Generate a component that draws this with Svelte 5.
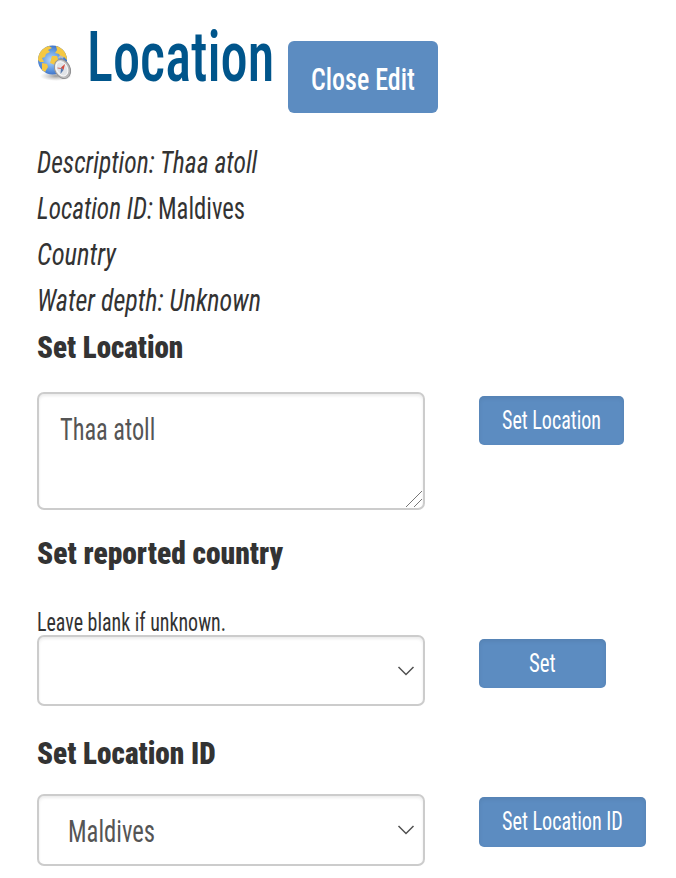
<script>
  // Condenses a label horizontally so that it fills the given width.
  function fit(node, width) {
    const scale = width / node.offsetWidth;
    node.style.transform = `scaleX(${scale})`;
    node.parentElement.style.width = `${width}px`;
  }

  const details = [
    { parts: [{ text: 'Description: Thaa atoll', width: 220, em: true }] },
    {
      parts: [
        { text: 'Location ID:', width: 116, em: true },
        { text: 'Maldives', width: 87, em: false }
      ]
    },
    { parts: [{ text: 'Country', width: 79, em: true }] },
    { parts: [{ text: 'Water depth: Unknown', width: 224, em: true }] }
  ];
</script>

{#snippet label(text, width)}
  <span class="fit"><span use:fit={width}>{text}</span></span>
{/snippet}

{#snippet chevron()}
  <svg class="chevron" width="18" height="12" viewBox="0 0 18 12">
    <path d="M1.5 2 L9 9.5 L16.5 2" fill="none" stroke="#505050" stroke-width="1.5" />
  </svg>
{/snippet}

<main>
  <header>
    <svg class="globe" width="36" height="40" viewBox="0 0 36 40">
      <defs>
        <radialGradient id="sea" cx="0.45" cy="0.5" r="0.6">
          <stop offset="0" stop-color="#b9d9fa" />
          <stop offset="0.5" stop-color="#69a0e6" />
          <stop offset="1" stop-color="#2c62bd" />
        </radialGradient>
        <linearGradient id="metal" x1="0" y1="0" x2="1" y2="1">
          <stop offset="0" stop-color="#f2f2f2" />
          <stop offset="1" stop-color="#a3a3a5" />
        </linearGradient>
        <radialGradient id="shade">
          <stop offset="0" stop-color="#555" stop-opacity="0.6" />
          <stop offset="1" stop-color="#888" stop-opacity="0" />
        </radialGradient>
        <clipPath id="ball"><circle cx="15.5" cy="16" r="14.5" /></clipPath>
      </defs>
      <ellipse cx="19" cy="32" rx="16" ry="5" fill="url(#shade)" />
      <circle cx="15.5" cy="16" r="14.5" fill="url(#sea)" />
      <g clip-path="url(#ball)" fill="#f5c843">
        <path d="M1 10 L5 4 L12 2 L15 4 L11 6 L13 8 L9 10 L8 13 L5 14 L7 18 L3 18 L0 15Z" />
        <path d="M5 19 L10 20 L11 23 L8 28 L5 26Z" />
        <path d="M19 2 L25 3 L30 10 L30 16 L27 13 L24 14 L22 10 L18 9 L20 6Z" />
        <path d="M15 12 L20 12 L22 18 L18 21 L13 19Z" />
      </g>
      <path d="M22 14 Q23 11 26 14" fill="none" stroke="#bbb" stroke-width="2" />
      <ellipse cx="25.5" cy="25" rx="7.6" ry="10" transform="rotate(-28 25.5 25)" fill="url(#metal)" stroke="#929294" stroke-width="1" />
      <ellipse cx="25" cy="24.8" rx="5.4" ry="7.5" transform="rotate(-28 25 24.8)" fill="#e1e4e8" stroke="#fafafa" stroke-width="1" />
      <path d="M28 20 L26.5 26 L24 23.5Z" fill="#d34b3f" />
      <path d="M23.5 30 L24 23.5 L26.5 26Z" fill="#5578ad" />
      <path d="M20.5 24 L24 24.5" stroke="#cf6a60" stroke-width="1" />
    </svg>
    <h1>{@render label('Location', 187)}</h1>
    <button class="close">{@render label('Close Edit', 104)}</button>
  </header>

  <section class="details">
    {#each details as line}
      <p>
        {#each line.parts as part}
          <span class:em={part.em}>{@render label(part.text, part.width)}</span>
        {/each}
      </p>
    {/each}
  </section>

  <h2>{@render label('Set Location', 146)}</h2>
  <div class="row area-row">
    <div class="field area">
      {@render label('Thaa atoll', 95)}
      <svg class="grip" width="18" height="18" viewBox="0 0 18 18">
        <path d="M1 17 L17 1 M9 17 L17 9" stroke="#777" stroke-width="1" />
      </svg>
    </div>
    <button class="set location">{@render label('Set Location', 99)}</button>
  </div>

  <h2 class="country">{@render label('Set reported country', 246)}</h2>
  <p class="hint">{@render label('Leave blank if unknown.', 189)}</p>
  <div class="row country-row">
    <div class="field select">{@render chevron()}</div>
    <button class="set short">{@render label('Set', 27)}</button>
  </div>

  <h2 class="ident">{@render label('Set Location ID', 179)}</h2>
  <div class="row ident-row">
    <div class="field select tall">{@render label('Maldives', 87)}{@render chevron()}</div>
    <button class="set id">{@render label('Set Location ID', 121)}</button>
  </div>
</main>

<style>
  :global(body) { margin: 0; background: #fff; }
  main {
    box-sizing: border-box;
    width: 676px;
    height: 878px;
    overflow: hidden;
    padding-left: 37px;
    font-family: Roboto, "Open Sans", sans-serif;
    font-size: 32px;
    font-stretch: 75%;
    color: #333;
  }
  .fit { display: inline-block; white-space: nowrap; text-align: left; }
  .fit > span { display: inline-block; transform-origin: 0 50%; }
  header { display: flex; height: 138.5px; align-items: flex-start; }
  .globe { margin-top: 44px; flex: none; }
  h1 {
    margin: 12px 0 0 14px;
    font-size: 69.5px;
    line-height: 92px;
    font-weight: 500;
    color: #00558b;
    width: 201px;
  }
  button {
    display: flex;
    justify-content: center;
    align-items: flex-start;
    box-sizing: border-box;
    flex: none;
    padding: 0;
    border: 0;
    border-radius: 6px;
    background: #5c8cc1;
    color: #fff;
    font-family: inherit;
    font-stretch: inherit;
  }
  .close { margin-top: 41px; width: 149.5px; height: 72px; font-size: 32px; line-height: 76px; font-weight: 500; }
  .details p { display: flex; gap: 5px; margin: 0; height: 46.3px; line-height: 46.3px; }
  .em { font-style: italic; }
  h2 { margin: 0; height: 46px; font-size: 32px; line-height: 46px; font-weight: 900; }
  .row { display: flex; align-items: flex-start; gap: 54px; }
  .field {
    position: relative;
    box-sizing: border-box;
    flex: none;
    width: 388px;
    border: 2px solid #ccc;
    border-radius: 7px;
    box-shadow: inset 0 2px 3px rgba(0, 0, 0, 0.08);
    background: #fff;
    color: #555;
  }
  .area-row { margin-top: 22.3px; height: 138px; }
  .area { height: 118px; padding: 12px 0 0 21px; line-height: 46px; }
  .grip { position: absolute; right: 0; bottom: 0; }
  .set { font-size: 25.5px; font-weight: 400; line-height: 49px; height: 49px; border-radius: 5px; box-shadow: inset 0 2px 4px rgba(0, 0, 0, 0.08); margin-top: 4px; }
  .location { width: 145px; }
  .short { width: 126.5px; }
  .id { width: 167px; height: 50px; margin-top: 3px; }
  .hint { margin: 29px 0 0; height: 30px; font-size: 25px; line-height: 36px; }
  .select { display: flex; height: 71px; padding-left: 29px; line-height: 71px; }
  .tall { height: 72px; }
  .chevron { position: absolute; right: 8px; top: 28px; }
  .country-row { height: 95px; }
  .ident-row { margin-top: 18px; }
</style>
